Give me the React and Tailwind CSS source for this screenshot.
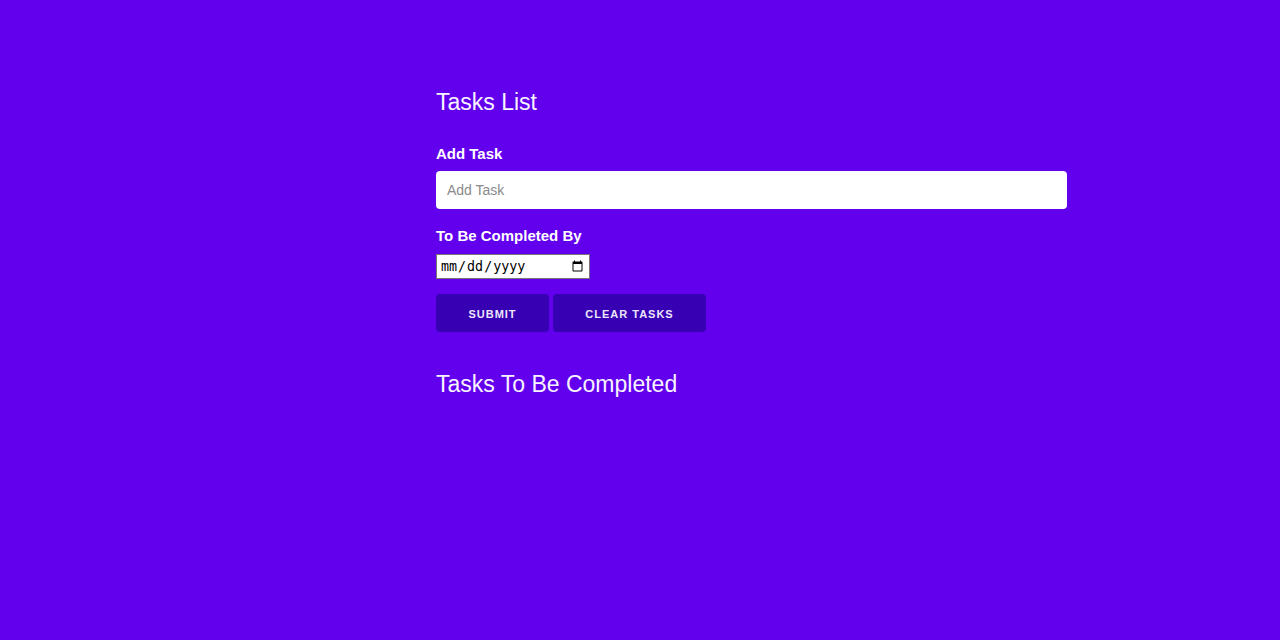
export default function App() {
  return (
    <div className="min-h-screen bg-[#6200ee] font-['Liberation_Sans',Arial,sans-serif] text-white">
      <div className="ml-[436px] w-[631px] pt-[86px]">
        <h1 className="text-[23px] leading-[32px] font-normal text-[#f8f4ff]">Tasks List</h1>

        <form className="mt-[27px]" onSubmit={(e) => e.preventDefault()}>
          <label htmlFor="task" className="block text-[15px] font-bold leading-[18px]">
            Add Task
          </label>
          <input
            id="task"
            type="text"
            placeholder="Add Task"
            className="mt-[8px] block h-[38px] w-full rounded-[4px] bg-white px-[11px] text-[14px] text-gray-800 placeholder:text-[#8a8a8a] outline-none"
          />

          <label htmlFor="due" className="mt-[18px] block text-[15px] font-bold leading-[18px]">
            To Be Completed By
          </label>
          <input
            id="due"
            type="date"
            className="mt-[9px] block h-[25px] w-[154px] border border-[#767676] bg-white px-[3px] font-['DejaVu_Sans_Mono',monospace] text-[13.33px] text-black"
          />

          <div className="mt-[15px] flex gap-[4px]">
            <button
              type="submit"
              className="h-[38px] w-[113px] rounded-[4px] bg-[#3700b3] pt-[2px] text-[11px] font-bold uppercase tracking-[1px] text-[#ece6fb]"
            >
              Submit
            </button>
            <button
              type="button"
              className="h-[38px] w-[153px] rounded-[4px] bg-[#3700b3] pt-[2px] text-[11px] font-bold uppercase tracking-[1px] text-[#ece6fb]"
            >
              Clear Tasks
            </button>
          </div>
        </form>

        <h2 className="mt-[36px] text-[23px] leading-[32px] font-normal text-[#f8f4ff]">Tasks To Be Completed</h2>
      </div>
    </div>
  );
}
